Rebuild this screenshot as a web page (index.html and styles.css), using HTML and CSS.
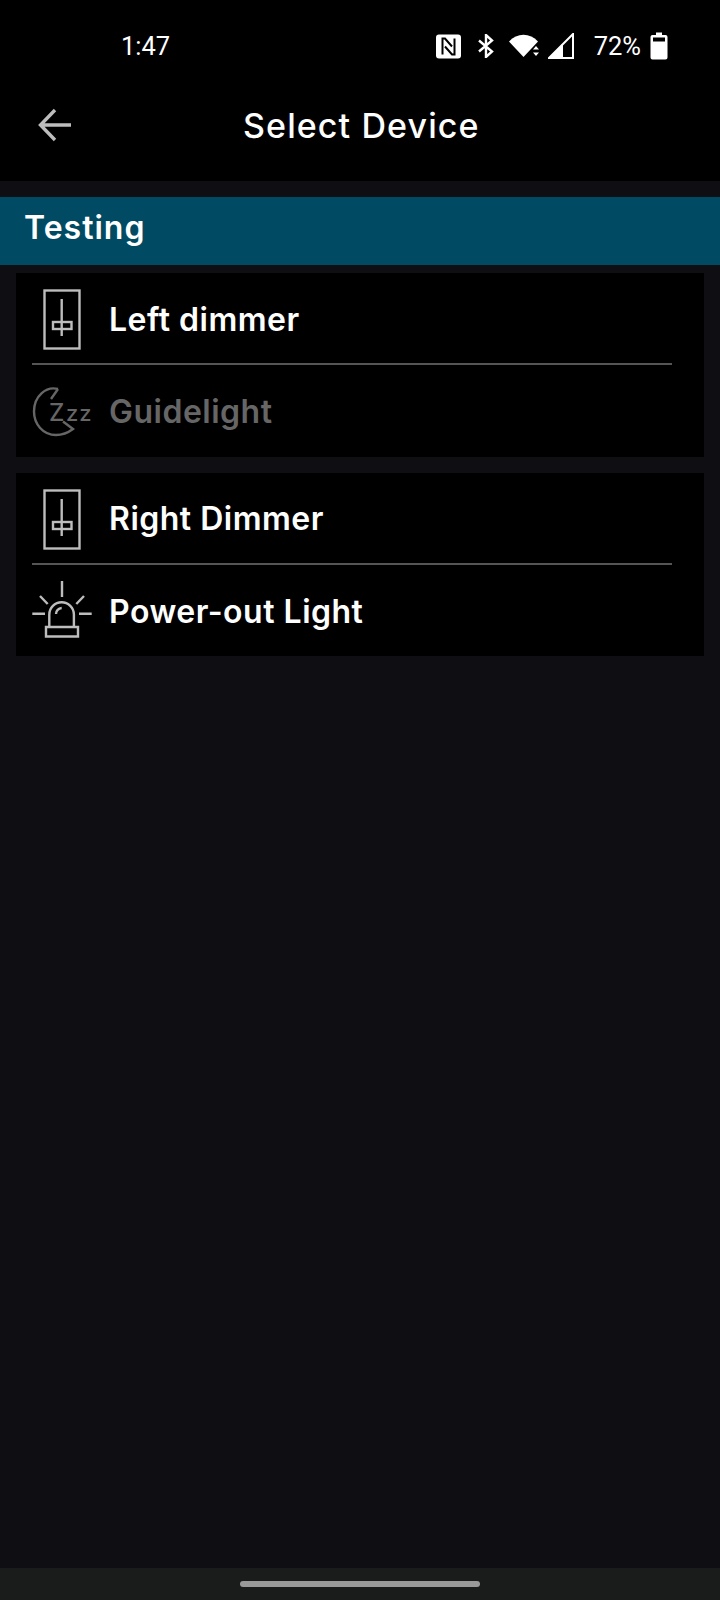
FILE: index.html
```html
<!DOCTYPE html>
<html lang="en">

<head>
    <meta charset="UTF-8">
    <meta name="viewport" content="width=device-width, initial-scale=1.0">
    <title>Select Device</title>
    <link rel="stylesheet" href="styles.css">
</head>

<body>
    <header class="header">
        <div class="status">
            <span class="time">1:47</span>
            <svg class="ico-nfc" width="25" height="25" viewBox="0 0 25 25">
                <rect x="0" y="0.5" width="25" height="24" rx="3" fill="#fff" />
                <path d="M6.500 20.500V4.500H9L16 12.500M18.500 4.500V20.500H16L9 12.500" fill="none" stroke="#000" stroke-width="2" />
            </svg>
            <svg class="ico-bt" width="16" height="24" viewBox="0 0 16 24">
                <path d="M1 6.500L14 17.500L8 23V1L14 6.500L1 17.500" fill="none" stroke="#fff" stroke-width="2.400" />
            </svg>
            <svg class="ico-wifi" width="32" height="24" viewBox="0 0 32 24">
                <path d="M0 7.500C8 -1.500 21 -1.500 29 7.500L14.500 23Z" fill="#fff" />
                <path d="M24 15.500L27 12L30 15.500ZM24 18.500L27 22L30 18.500Z" fill="#fff" />
            </svg>
            <svg class="ico-signal" width="26" height="26" viewBox="0 0 26 26">
                <path d="M1 25L25 1V25Z" fill="none" stroke="#fff" stroke-width="2" />
                <path d="M1 25L15 11V25Z" fill="#fff" />
            </svg>
            <span class="level">72%</span>
            <svg class="ico-batt" width="18" height="28" viewBox="0 0 18 28">
                <path d="M6 0.500H12V3H15.500Q17.500 3 17.500 5V25.500Q17.500 27.500 15.500 27.500H2.500Q0.500 27.500 0.500 25.500V5Q0.500 3 2.500 3H6Z" fill="#fff" />
                <rect x="3" y="5.500" width="12" height="4" fill="#000" />
            </svg>
        </div>
        <div class="toolbar">
            <svg class="back" width="34" height="34" viewBox="0 0 34 34">
                <path d="M33 17H3M17 2L2.500 17L17 32" fill="none" stroke="#bdbdbd" stroke-width="3.400" />
            </svg>
            <h1 class="title">Select Device</h1>
        </div>
    </header>

    <main class="main">
        <div class="group">Testing</div>

        <section class="card">
            <div class="row">
                <svg class="ico" width="60" height="60" viewBox="0 0 60 60">
                    <g fill="none" stroke="#bdbdbd" stroke-width="2.400">
                        <rect x="12.500" y="2.500" width="35" height="58" />
                        <path d="M29.700 11V48" />
                        <rect x="21" y="34" width="18.500" height="7" />
                    </g>
                </svg>
                <span class="name">Left dimmer</span>
            </div>
            <div class="line"></div>
            <div class="row off">
                <svg class="ico" width="60" height="60" viewBox="0 0 60 60">
                    <path d="M26 8C14 5 2 15 2 30.500C2 43 11 54 24 54C32 54 37 51 41 48L31 40.500M26 8L19 18" fill="none" stroke="#666" stroke-width="2.400" />
                    <text class="zbig" x="17" y="40">Z</text>
                    <text class="zsmall" x="34" y="40">zz</text>
                </svg>
                <span class="name">Guidelight</span>
            </div>
        </section>

        <section class="card">
            <div class="row">
                <svg class="ico" width="60" height="60" viewBox="0 0 60 60">
                    <g fill="none" stroke="#bdbdbd" stroke-width="2.400">
                        <rect x="12.500" y="2.500" width="35" height="58" />
                        <path d="M29.700 11V48" />
                        <rect x="21" y="34" width="18.500" height="7" />
                    </g>
                </svg>
                <span class="name">Right Dimmer</span>
            </div>
            <div class="line"></div>
            <div class="row">
                <svg class="ico" width="60" height="60" viewBox="0 0 60 60">
                    <path d="M30 1V17M8 16L15.700 24M52 16L44.300 24M0.300 33.700H13M47 33.700H59.700M17.300 47V34.600A12.300 12.300 0 0 1 41.900 34.600V47M24 34A6 6 0 0 1 29.700 28M14 47H46V56.500H14Z" fill="none" stroke="#bdbdbd" stroke-width="2.400" />
                </svg>
                <span class="name">Power-out Light</span>
            </div>
        </section>
    </main>

    <div class="navbar"><span class="pill"></span></div>
</body>

</html>
```

FILE: styles.css
```css
* {
    padding: 0;
    margin: 0;
    box-sizing: border-box;
}

body {
    width: 720px;
    height: 1600px;
    display: flex;
    flex-direction: column;
    background: #0f0f13;
    font-family: Inter, "Noto Sans", sans-serif;
    color: #fff;
}

/* 顶部 */
.header {
    height: 181px;
    background: #000;
}

.status {
    height: 92px;
    padding-left: 121px;
    display: flex;
    align-items: center;
}

.time {
    font: 400 25.500px Roboto, sans-serif;
    margin-right: auto;
}

.level {
    font: 400 25.500px Roboto, sans-serif;
    margin-left: 20px;
}

.ico-bt {
    margin-left: 17px;
}

.ico-wifi {
    margin-left: 15px;
}

.ico-signal {
    margin-left: 7px;
}

.ico-batt {
    margin-left: 9px;
    margin-right: 52px;
}

.toolbar {
    height: 66px;
    padding-left: 38px;
    display: flex;
    align-items: center;
}

.title {
    font-size: 34px;
    font-weight: 500;
    letter-spacing: 1.100px;
    margin-left: 171px;
}

/* 列表 */
.main {
    flex: 1;
    padding-top: 16px;
}

.group {
    height: 68px;
    padding: 0 0 8px 24px;
    display: flex;
    align-items: center;
    background: #004a63;
    font-size: 32px;
    font-weight: 600;
    letter-spacing: 1px;
}

.card {
    margin: 8px 16px 0;
    background: #000;
}

.card + .card {
    margin-top: 16px;
}

.row {
    height: 90px;
    padding-left: 16px;
    display: flex;
    align-items: center;
    gap: 17px;
}

.line + .row {
    height: 91.500px;
}

.ico {
    overflow: visible;
}

.name {
    padding-top: 2px;
    font-size: 32px;
    font-weight: 600;
    letter-spacing: 0.500px;
}

.off .name {
    color: #666;
}

.line {
    height: 2px;
    margin: 0 32px 0 16px;
    background: #555;
}

.zbig,
.zsmall {
    font-family: Inter, sans-serif;
    font-weight: 500;
    fill: #666;
}

.zbig {
    font-size: 24px;
}

.zsmall {
    font-size: 22px;
    letter-spacing: 1px;
}

/* 底部 */
.navbar {
    height: 32px;
    display: flex;
    align-items: center;
    justify-content: center;
    background: #1a1b1b;
}

.pill {
    width: 240px;
    height: 6px;
    border-radius: 3px;
    background: #999;
}
```
